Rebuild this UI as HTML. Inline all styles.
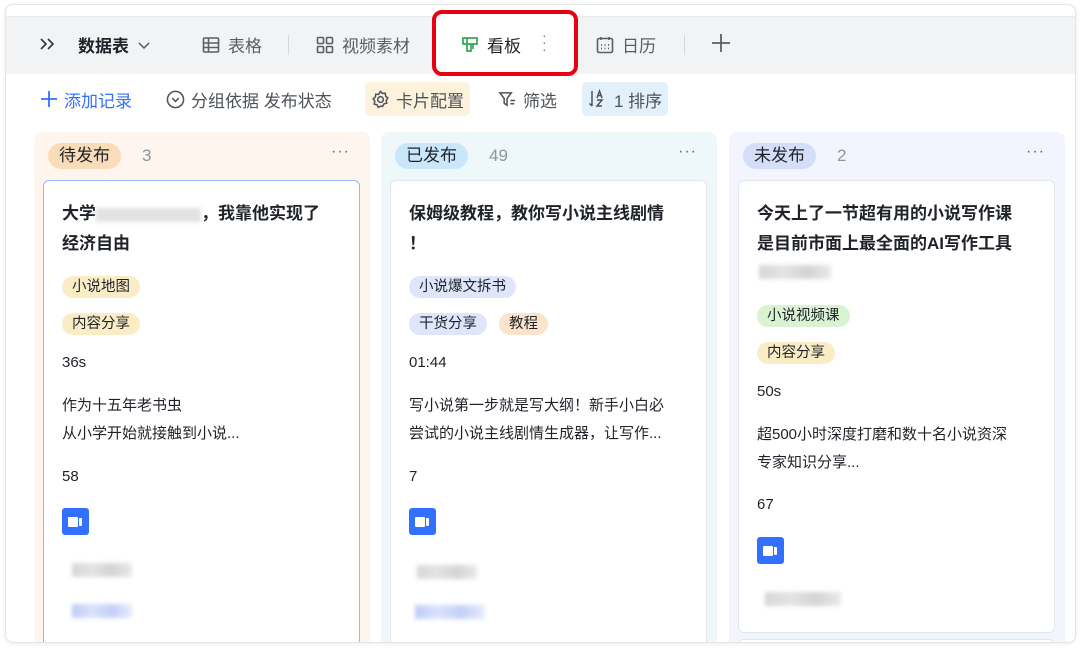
<!DOCTYPE html>
<html><head><meta charset="utf-8"><style>
*{box-sizing:border-box;margin:0;padding:0}
html,body{width:1080px;height:649px;overflow:hidden}
body{background:#fff;font-family:"Liberation Sans","Noto Sans CJK SC",sans-serif;color:#1f2329;position:relative}
.frame{position:absolute;left:5px;top:4px;width:1071px;height:639px;border:1px solid #e3e5e8;border-radius:8px;overflow:hidden;background:#fff;box-shadow:0 1px 4px rgba(0,0,0,.08)}
.tabbar{position:absolute;left:0;top:11px;width:100%;height:58px;background:#f2f3f5;border-top:1px solid #e6e8eb}
.t{position:absolute;top:27px;font-size:17px;color:#5a5f66;display:flex;align-items:center;gap:8px}
.sep{position:absolute;top:30px;width:1px;height:20px;background:#d6d8dc}
.red{position:absolute;left:432px;top:10px;width:146px;height:66px;border:4px solid #e60012;border-radius:10px;background:#fff;z-index:3}
.tool{position:absolute;top:78px;height:32px;font-size:17px;color:#4e5359;display:flex;align-items:center;gap:6px;padding:0 6px;border-radius:5px}
.col{position:absolute;top:127px;width:336px;height:530px;border-radius:8px}
.hd{position:absolute;left:14px;top:11px;height:26px;padding:0 11px;border-radius:13px;font-size:17px;line-height:26px;color:#1f2329}
.cnt{position:absolute;left:108px;top:14px;font-size:17px;color:#8f959e}
.dots{position:absolute;right:20px;top:11px;font-size:16px;color:#646a73;letter-spacing:1px}
.card{position:absolute;left:9px;top:48px;width:317px;height:500px;background:#fff;border-radius:6px;border:1px solid #e3e6ea}
.ct{position:absolute;left:18px;font-size:17px;font-weight:bold;line-height:30px;color:#1f2329}
.tag{position:absolute;left:18px;height:22px;line-height:22px;padding:0 10px;border-radius:11px;font-size:14.5px;color:#1f2329}
.tx{position:absolute;left:18px;font-size:15px;color:#1f2329;line-height:28px}
.vid{position:absolute;left:18px;width:27px;height:27px;background:#3370ff;border-radius:3px}
.vid:before{content:"";position:absolute;left:6px;top:9px;width:10px;height:10px;background:#fff;border-radius:1px}
.vid:after{content:"";position:absolute;left:17px;top:10px;width:3px;height:8px;background:#fff;border-radius:1px}
.blur{position:absolute;height:14px;background:linear-gradient(90deg,#ccc,#ddd,#c9c9c9,#e4e4e4);filter:blur(2px);opacity:.8}
.bb{background:linear-gradient(90deg,#aebff5,#d2dbfa,#b4c4f5,#e2e8fc)}
</style></head><body>
<div class="frame">
<div class="tabbar"></div>
<div class="t" style="left:32px;top:31px"><svg width="20" height="16" viewBox="0 0 20 16" fill="none" stroke="#333" stroke-width="1.6"><path d="M3 3l5 5-5 5M10 3l5 5-5 5"/></svg></div>
<div class="t" style="left:72px;color:#1f2329;font-weight:bold">数据表 <svg width="14" height="10" viewBox="0 0 14 10" fill="none" stroke="#555" stroke-width="1.5"><path d="M2 3l5 5 5-5"/></svg></div>
<div class="t" style="left:196px"><svg width="18" height="18" viewBox="0 0 18 18" fill="none" stroke="#5a5f66" stroke-width="1.6"><rect x="1.5" y="2" width="15" height="14" rx="1"/><path d="M1.5 7h15M1.5 11.5h15M6.5 2v14"/></svg>表格</div>
<div class="sep" style="left:282px"></div>
<div class="t" style="left:310px"><svg width="18" height="18" viewBox="0 0 18 18" fill="none" stroke="#5a5f66" stroke-width="1.6"><rect x="1.5" y="1.5" width="6" height="6" rx="1"/><rect x="10.5" y="1.5" width="6" height="6" rx="1"/><rect x="1.5" y="10.5" width="6" height="6" rx="1"/><rect x="10.5" y="10.5" width="6" height="6" rx="1"/></svg>视频素材</div>
<div class="sep" style="left:678px"></div>
<div class="t" style="left:590px"><svg width="18" height="18" viewBox="0 0 18 18" fill="none" stroke="#5a5f66" stroke-width="1.6"><rect x="1.5" y="2.5" width="15" height="14" rx="1.5"/><path d="M5 1v3M13 1v3" /><path d="M5 9h1M8.5 9h1M12 9h1M5 12.5h1M8.5 12.5h1M12 12.5h1" stroke-width="1.8"/></svg>日历</div>
<div class="t" style="left:704px"><svg width="22" height="22" viewBox="0 0 22 22" stroke="#5a5f66" stroke-width="1.8"><path d="M11 2v18M2 11h18"/></svg></div>
<div class="tool" style="left:28px;color:#3370ff"><svg width="18" height="18" viewBox="0 0 18 18" stroke="#3370ff" stroke-width="1.8"><path d="M9 1v16M1 9h16"/></svg>添加记录</div>
<div class="tool" style="left:154px"><svg width="19" height="19" viewBox="0 0 20 20" fill="none" stroke="#4e5359" stroke-width="1.6"><circle cx="10" cy="10" r="8.5"/><path d="M6.5 8.5l3.5 3.5 3.5-3.5"/></svg>分组依据 发布状态</div>
<div class="tool" style="left:359px;background:#fdf3dd;height:34px;top:77px"><svg width="19" height="19" viewBox="0 0 20 20" fill="none" stroke="#4e5359" stroke-width="1.6"><path d="M10 1.5l2 2.2 3-.3.4 3 2.3 2-1.7 2.5.6 3-3 .7-1.3 2.7L10 17l-2.3 1.3-1.3-2.7-3-.7.6-3L2.3 9.4l2.3-2 .4-3 3 .3z"/><circle cx="10" cy="10" r="3"/></svg>卡片配置</div>
<div class="tool" style="left:486px"><svg width="19" height="19" viewBox="0 0 20 20" fill="none" stroke="#4e5359" stroke-width="1.6"><path d="M2 3h12l-4.5 6v7l-3-2V9z"/><path d="M13 11h5M13 14.5h4"/></svg>筛选</div>
<div class="tool" style="left:576px;background:#e1f0fb;height:34px;top:77px"><svg width="20" height="20" viewBox="0 0 20 20" fill="none" stroke="#4e5359" stroke-width="1.5"><path d="M4 2v15M1.5 14.5L4 17"/><path d="M9 9l2.5-7 2.5 7M10 6.5h3M9 11h5l-5 6h5"/></svg>1 排序</div>

<div class="col" style="left:28px;background:#fdf5ee">
<div class="hd" style="background:#fbdcb8">待发布</div><div class="cnt">3</div><div class="dots">···</div>
<div class="card" style="border-color:#9db5f5">
<div class="ct" style="top:18px">大学<span style="display:inline-block;width:105px;height:14px;background:#e2e2e2;filter:blur(2px);vertical-align:middle"></span>，我靠他实现了<br>经济自由</div>
<div class="tag" style="top:95px;background:#faedc6">小说地图</div>
<div class="tag" style="top:132px;background:#faedc6">内容分享</div>
<div class="tx" style="top:168px">36s</div>
<div class="tx" style="top:211px">作为十五年老书虫<br>从小学开始就接触到小说...</div>
<div class="tx" style="top:282px">58</div>
<div class="vid" style="top:327px"></div>
<div class="blur" style="left:28px;top:382px;width:60px"></div>
<div class="blur bb" style="left:28px;top:423px;width:60px"></div>
</div></div>

<div class="col" style="left:375px;background:#eef8fb">
<div class="hd" style="background:#c9e6fb">已发布</div><div class="cnt">49</div><div class="dots">···</div>
<div class="card">
<div class="ct" style="top:18px">保姆级教程，教你写小说主线剧情<br>！</div>
<div class="tag" style="top:95px;background:#dfe6fb">小说爆文拆书</div>
<div class="tag" style="top:132px;background:#dfe6fb">干货分享</div>
<div class="tag" style="top:132px;left:108px;background:#fbe3cc">教程</div>
<div class="tx" style="top:168px">01:44</div>
<div class="tx" style="top:211px">写小说第一步就是写大纲！新手小白必<br>尝试的小说主线剧情生成器，让写作...</div>
<div class="tx" style="top:282px">7</div>
<div class="vid" style="top:327px"></div>
<div class="blur" style="left:26px;top:384px;width:60px"></div>
<div class="blur bb" style="left:24px;top:424px;width:70px"></div>
</div></div>

<div class="col" style="left:723px;background:#f2f5fd">
<div class="hd" style="background:#d5def9">未发布</div><div class="cnt">2</div><div class="dots">···</div>
<div class="card" style="height:453px">
<div class="ct" style="top:18px">今天上了一节超有用的小说写作课<br>是目前市面上最全面的AI写作工具</div>
<div class="blur" style="left:20px;top:84px;width:72px"></div>
<div class="tag" style="top:124px;background:#d9f2d2">小说视频课</div>
<div class="tag" style="top:161px;background:#faedc6">内容分享</div>
<div class="tx" style="top:197px">50s</div>
<div class="tx" style="top:240px">超500小时深度打磨和数十名小说资深<br>专家知识分享...</div>
<div class="tx" style="top:310px">67</div>
<div class="vid" style="top:356px"></div>
<div class="blur" style="left:26px;top:411px;width:76px"></div>
</div>
<div class="card" style="top:507px;height:40px"></div>
</div>
</div>
<div class="red"><div style="position:absolute;left:25px;top:18px;font-size:17px;display:flex;align-items:center;gap:8px;color:#1f2329"><svg width="18" height="18" viewBox="0 0 18 18" fill="none" stroke="#34a853" stroke-width="1.7"><path d="M2 2h14v6H2zM6 2v13h4V8M10 8h2v5"/></svg>看板</div><div style="position:absolute;left:106px;top:18px;font-size:14px;color:#777;line-height:7px">·<br>·<br>·</div></div>
</body></html>
